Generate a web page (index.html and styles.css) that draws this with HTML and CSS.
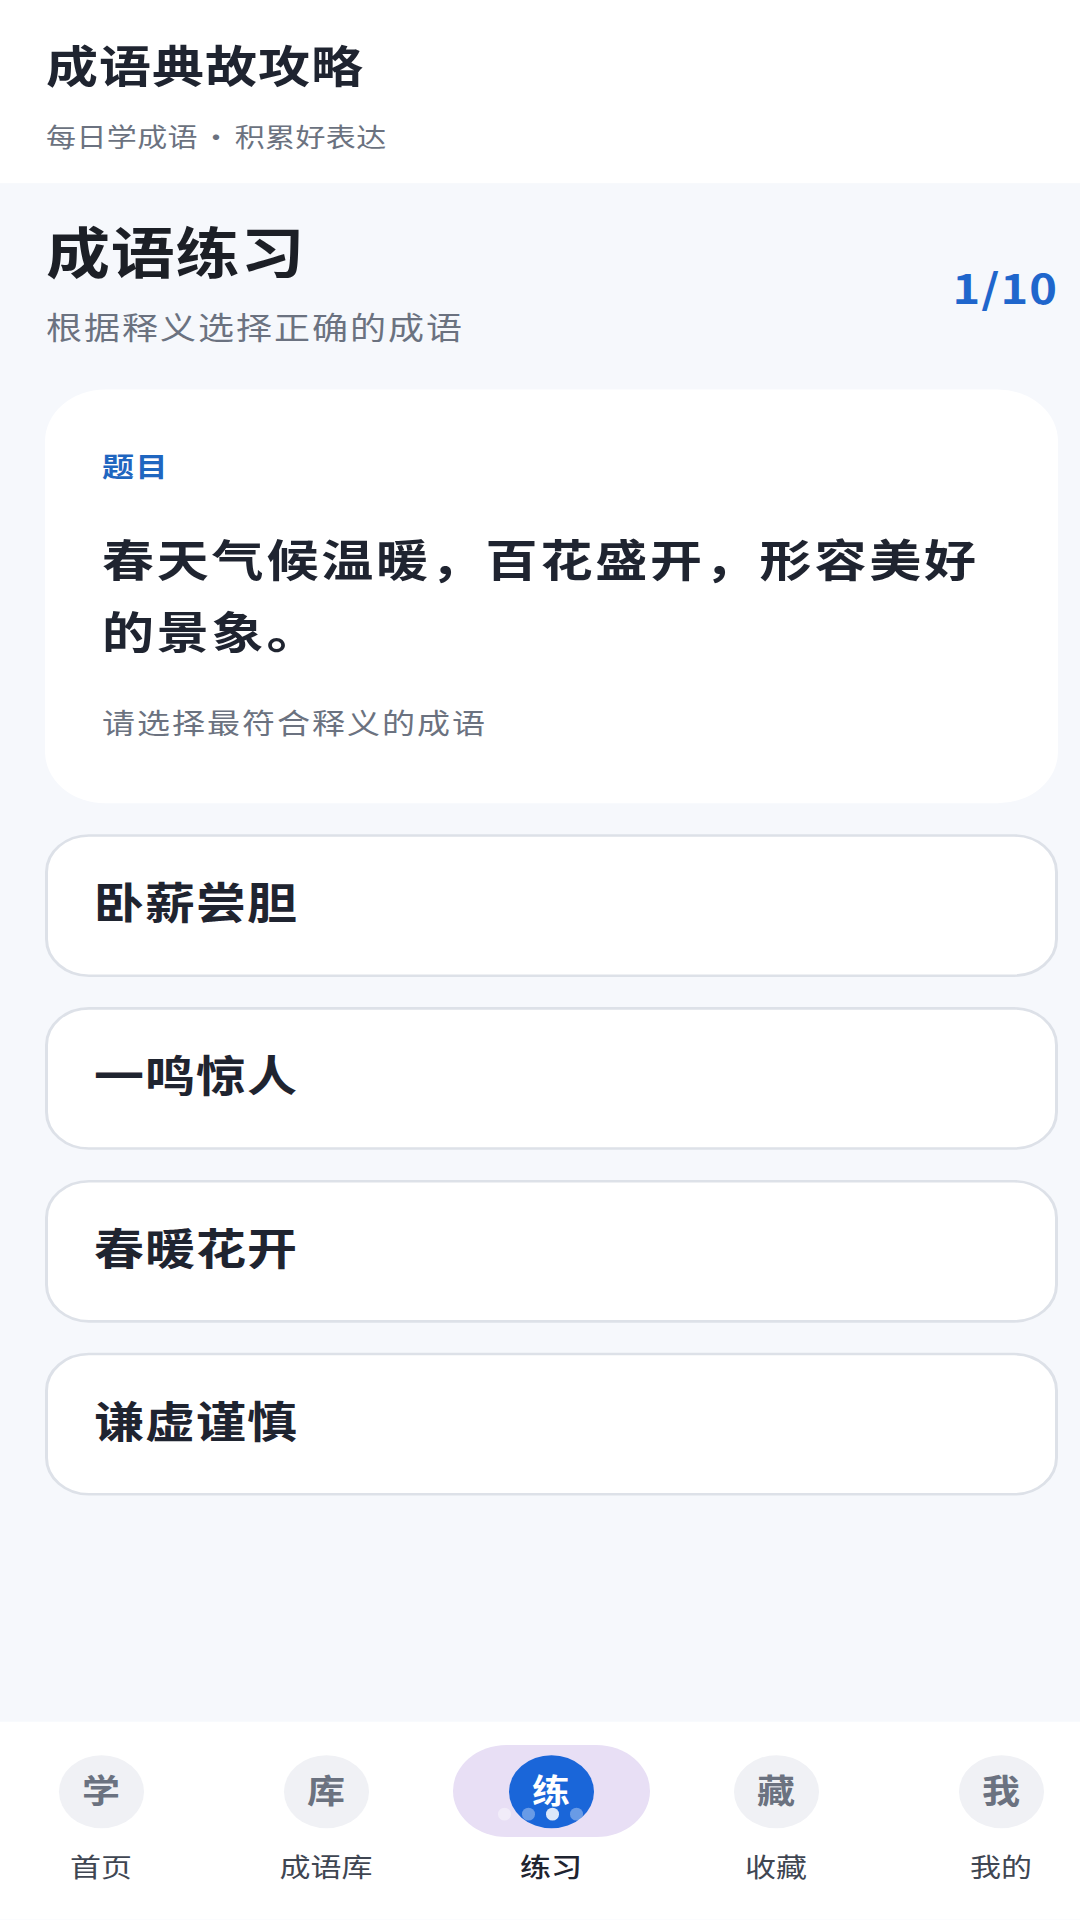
FILE: index.html
```html
<!DOCTYPE html>
<html lang="zh-CN">
<head>
  <meta charset="UTF-8">
  <title>成语典故攻略</title>
  <link rel="stylesheet" href="styles.css">
</head>
<body>
  <div class="app">
    <header class="topbar">
      <h1>成语典故攻略</h1>
      <p>每日学成语 · 积累好表达</p>
    </header>

    <main class="content">
      <div class="page-head">
        <div>
          <h2>成语练习</h2>
          <p>根据释义选择正确的成语</p>
        </div>
        <div class="progress">1/10</div>
      </div>

      <section class="question-card">
        <div class="tag">题目</div>
        <div class="question">春天气候温暖，百花盛开，形容美好的景象。</div>
        <div class="hint">请选择最符合释义的成语</div>
      </section>

      <div class="options">
        <button class="option">卧薪尝胆</button>
        <button class="option">一鸣惊人</button>
        <button class="option">春暖花开</button>
        <button class="option">谦虚谨慎</button>
      </div>
    </main>

    <nav class="tabbar">
      <div class="tab">
        <div class="tab-icon">学</div>
        <span>首页</span>
      </div>
      <div class="tab">
        <div class="tab-icon">库</div>
        <span>成语库</span>
      </div>
      <div class="tab active">
        <div class="tab-icon">练</div>
        <span>练习</span>
        <div class="ripple">
          <i class="dot-faint"></i>
          <i class="dot-mid"></i>
          <i class="dot-bright"></i>
          <i class="dot-mid"></i>
        </div>
      </div>
      <div class="tab">
        <div class="tab-icon">藏</div>
        <span>收藏</span>
      </div>
      <div class="tab">
        <div class="tab-icon">我</div>
        <span>我的</span>
      </div>
    </nav>
  </div>
</body>
</html>
```

FILE: styles.css
```css
html, body {
  margin: 0;
}

body {
  font-family: "Noto Sans CJK SC", "Noto Sans", sans-serif;
  background: #f6f8fc;
  color: #1f2430;
}

/* the screen is squeezed vertically, so everything is laid out taller and scaled */
.app {
  width: 1080px;
  height: 2232px;
  margin-bottom: -312px;
  display: flex;
  flex-direction: column;
  transform: scaleY(0.86);
  transform-origin: top left;
}

.topbar {
  height: 213px;
  box-sizing: border-box;
  padding: 45px 46px 0;
  background: #ffffff;
}

.topbar h1 {
  margin: 0;
  font-size: 52px;
  line-height: 60px;
  letter-spacing: 1px;
  font-weight: 700;
}

.topbar p {
  margin: 33px 0 0;
  font-size: 30px;
  line-height: 40px;
  letter-spacing: 0.4px;
  word-spacing: -4px;
  color: #6b7280;
}

.content {
  flex: 1;
  padding: 0 22px 0 45px;
}

.page-head {
  height: 240px;
  box-sizing: border-box;
  padding: 38px 0 0 1px;
  display: flex;
  justify-content: space-between;
  align-items: flex-start;
}

.page-head h2 {
  margin: 0;
  font-size: 64px;
  line-height: 76px;
  letter-spacing: 0.8px;
  font-weight: 700;
  color: #1c1f26;
}

.page-head p {
  margin: 28px 0 0;
  font-size: 36px;
  line-height: 46px;
  letter-spacing: 2px;
  color: #6b7280;
}

.progress {
  font-size: 47px;
  font-weight: 700;
  letter-spacing: 1px;
  color: #1f66cc;
  margin-top: 48px;
}

.question-card {
  height: 481px;
  box-sizing: border-box;
  padding: 68px 57px 0;
  background: #ffffff;
  border-radius: 60px;
}

.tag {
  font-size: 32px;
  line-height: 40px;
  letter-spacing: 1.5px;
  font-weight: 700;
  color: #1f66c0;
}

.question {
  margin-top: 46px;
  font-size: 52px;
  line-height: 84px;
  letter-spacing: 2.8px;
  font-weight: 700;
}

.hint {
  margin-top: 42px;
  font-size: 33px;
  line-height: 44px;
  letter-spacing: 2px;
  color: #6b7280;
}

.options {
  margin-top: 36px;
  display: flex;
  flex-direction: column;
  gap: 35px;
}

.option {
  height: 166px;
  box-sizing: border-box;
  padding: 0 46px 12px;
  text-align: left;
  font-family: inherit;
  font-size: 50px;
  font-weight: 700;
  letter-spacing: 1px;
  color: #1f2430;
  background: #ffffff;
  border: 3px solid #dde1e8;
  border-radius: 44px;
}

.tabbar {
  height: 230px;
  box-sizing: border-box;
  padding: 39px 24px 0 46px;
  display: flex;
  justify-content: space-between;
  background: #ffffff;
}

.tab {
  position: relative;
  width: 110px;
  display: flex;
  flex-direction: column;
  align-items: center;
}

.tab-icon {
  width: 85px;
  height: 85px;
  border-radius: 50%;
  background: #f0f1f5;
  color: #6b7280;
  font-size: 38px;
  font-weight: 700;
  line-height: 80px;
  text-align: center;
}

.tab span {
  margin-top: 22px;
  font-size: 31px;
  line-height: 44px;
  white-space: nowrap;
  color: #3f4652;
}

.tab.active span {
  position: relative;
  font-weight: 500;
  color: #1f2430;
}

.tab.active .tab-icon {
  position: relative;
  background: #1a66d9;
  color: #ffffff;
}

/* lilac pill behind the current tab */
.tab.active::before {
  content: "";
  position: absolute;
  top: -12px;
  left: -43px;
  width: 197px;
  height: 107px;
  border-radius: 54px;
  background: #e8dff5;
}

.ripple {
  position: absolute;
  top: 61px;
  left: 2px;
  display: flex;
  gap: 11px;
}

.ripple i {
  width: 13px;
  height: 15px;
  border-radius: 50%;
  background: #ffffff;
}

.ripple .dot-faint {
  opacity: 0.4;
}

.ripple .dot-mid {
  opacity: 0.35;
}

.ripple .dot-bright {
  opacity: 0.85;
}
```
